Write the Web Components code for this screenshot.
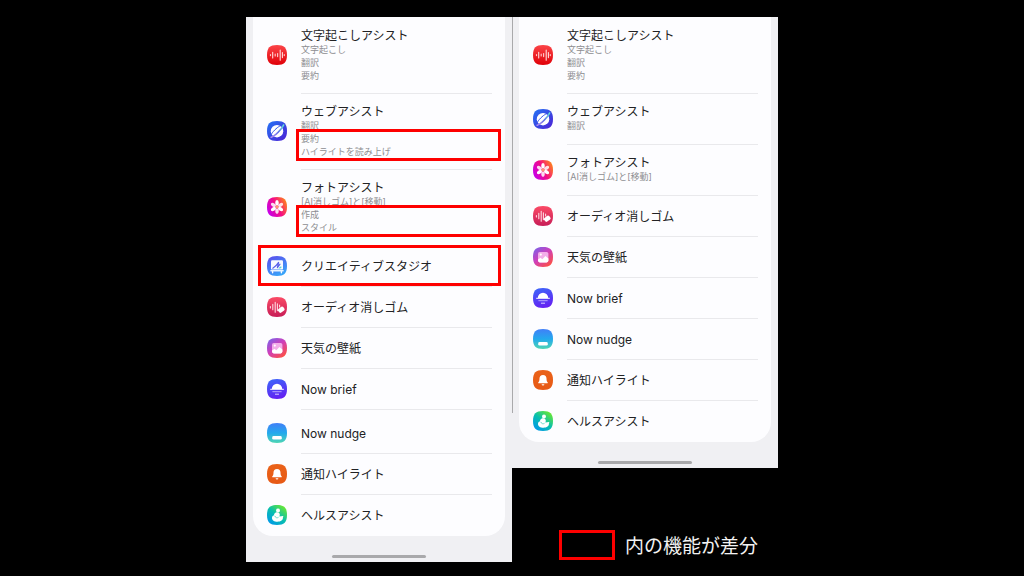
<!DOCTYPE html>
<html lang="ja">
<head>
<meta charset="utf-8">
<meta name="viewport" content="width=device-width, initial-scale=1">
<title>AIアシスト機能</title>
<style>
  body {
    margin: 0;
    background: #000;
    font-family: Inter, "Noto Sans CJK JP", sans-serif;
  }
</style>
</head>
<body>
<compare-board>
  <phone-screen slot="before">
    <feature-card seam>
      <feature-row icon="transcript" label="文字起こしアシスト">
        <feature-note>文字起こし</feature-note>
        <feature-note>翻訳</feature-note>
        <feature-note>要約</feature-note>
      </feature-row>
      <feature-row icon="web" label="ウェブアシスト">
        <feature-note>翻訳</feature-note>
        <diff-mark>
          <feature-note>要約</feature-note>
          <feature-note>ハイライトを読み上げ</feature-note>
        </diff-mark>
      </feature-row>
      <feature-row icon="photo" label="フォトアシスト">
        <feature-note>[AI消しゴム]と[移動]</feature-note>
        <diff-mark>
          <feature-note>作成</feature-note>
          <feature-note>スタイル</feature-note>
        </diff-mark>
      </feature-row>
      <feature-row icon="studio" label="クリエイティブスタジオ" single marked></feature-row>
      <feature-row icon="audio" label="オーディオ消しゴム" single></feature-row>
      <feature-row icon="weather" label="天気の壁紙" single></feature-row>
      <feature-row icon="brief" label="Now brief" single></feature-row>
    </feature-card>
    <feature-card end>
      <feature-row icon="nudge" label="Now nudge" single></feature-row>
      <feature-row icon="bell" label="通知ハイライト" single></feature-row>
      <feature-row icon="health" label="ヘルスアシスト" single last></feature-row>
    </feature-card>
  </phone-screen>

  <phone-screen slot="after">
    <feature-card top end>
      <feature-row icon="transcript" label="文字起こしアシスト">
        <feature-note>文字起こし</feature-note>
        <feature-note>翻訳</feature-note>
        <feature-note>要約</feature-note>
      </feature-row>
      <feature-row icon="web" label="ウェブアシスト">
        <feature-note>翻訳</feature-note>
      </feature-row>
      <feature-row icon="photo" label="フォトアシスト">
        <feature-note>[AI消しゴム]と[移動]</feature-note>
      </feature-row>
      <feature-row icon="audio" label="オーディオ消しゴム" single></feature-row>
      <feature-row icon="weather" label="天気の壁紙" single></feature-row>
      <feature-row icon="brief" label="Now brief" single></feature-row>
      <feature-row icon="nudge" label="Now nudge" single></feature-row>
      <feature-row icon="bell" label="通知ハイライト" single></feature-row>
      <feature-row icon="health" label="ヘルスアシスト" single last></feature-row>
    </feature-card>
  </phone-screen>

  <diff-legend slot="legend">内の機能が差分</diff-legend>
</compare-board>

<script>
  // Each icon: gradient stops and direction for the tile, then the glyph on it.
  const ICONS = {
    transcript: {
      from: "#fb4548", to: "#e00008", dir: [0, 0, 0, 1],
      glyph: `
        <path d="M3.500 9.600v1M8.200 9.200v1.800M10.600 8.600v3M17.300 9.600v1" stroke="#ffc4c4" stroke-width="1.200" stroke-linecap="round"/>
        <path d="M5.700 7.200v5.800M13.200 5v10.200M15.400 7.600v5" stroke="#ffdcdc" stroke-width="1.100" stroke-linecap="round"/>`,
    },
    web: {
      from: "#2374f5", to: "#4d20d4", dir: [0, 0, 1, 1],
      glyph: `
        <linearGradient id="ring" x1="0" y1="1" x2="1" y2="0">
          <stop offset="0" stop-color="#b78df0"/><stop offset=".5" stop-color="#5a6ce8"/><stop offset="1" stop-color="#63e8d4"/>
        </linearGradient>
        <circle cx="10" cy="10.2" r="6.200" fill="#fff"/>
        <path d="M4.200 16.200C2.600 15.200 5.200 11.200 9 7.800S16.800 3 16.600 4.400" fill="none" stroke="url(#tile)" stroke-width="1"/>
        <path d="M4.200 16.200C7.500 15.400 14.600 8.600 16.600 4" fill="none" stroke="url(#ring)" stroke-width="1.600" stroke-linecap="round"/>`,
    },
    photo: {
      from: "#c500ed", mid: "#f40d83", to: "#ff8a16", dir: [0, .7, 1, .2],
      glyph: `
        <g fill="#fff">
          <ellipse cx="10" cy="5.9" rx="1.8" ry="2.8"/>
          <ellipse cx="10" cy="5.9" rx="1.8" ry="2.8" transform="rotate(60 10 10)" opacity=".85"/>
          <ellipse cx="10" cy="5.9" rx="1.8" ry="2.8" transform="rotate(120 10 10)"/>
          <ellipse cx="10" cy="5.9" rx="1.8" ry="2.8" transform="rotate(180 10 10)" opacity=".85"/>
          <ellipse cx="10" cy="5.9" rx="1.8" ry="2.8" transform="rotate(240 10 10)"/>
          <ellipse cx="10" cy="5.9" rx="1.8" ry="2.8" transform="rotate(300 10 10)" opacity=".85"/>
        </g>
        <circle cx="10" cy="10" r="1.4" fill="#ff9a6c"/>`,
    },
    studio: {
      from: "#5a50ed", to: "#36a8fa", dir: [.2, 0, .7, 1],
      glyph: `
        <path d="M5.600 15.200v1.600M14.400 15.200v1.600" stroke="#fff" stroke-width="1.4" stroke-linecap="round"/>
        <rect x="4" y="4.200" width="12" height="9.400" rx="1.2" fill="#f7faff"/>
        <rect x="3.200" y="14" width="13.600" height="1.500" rx=".7" fill="#eaf4ff"/>
        <path d="M5.800 12.200Q9.400 10 11.600 6.400L10.400 11.600l2.600-3.400" fill="none" stroke="#5a62ea" stroke-width="1.2" stroke-linecap="round" stroke-linejoin="round"/>
        <path d="M11.400 12.400c1-1 1.8-2.4 2.8-1.8s0 1.6-1 1.9z" fill="#55d3ce"/>`,
    },
    audio: {
      from: "#fb4b66", to: "#c71d57", dir: [0, 0, 0, 1],
      glyph: `
        <path d="M3.4 9.5v1.4M5.8 7.4v5.4M8.2 5.200v10M10.400 6.800v6.800M12.600 8v2" stroke="#ffd9e1" stroke-width="1.1" stroke-linecap="round"/>
        <rect x="11" y="10.4" width="6.4" height="4.6" rx="1.4" transform="rotate(-38 14.2 12.6)" fill="#fff"/>`,
    },
    weather: {
      from: "#7067ee", mid: "#ce3fbc", to: "#ff5140", dir: [0, 0, .8, 1],
      glyph: `
        <rect x="5" y="5" width="10.4" height="10.4" rx="1.8" fill="#f3aee9"/>
        <circle cx="7.8" cy="7.6" r="1.1" fill="#fff"/>
        <path d="M5 12.4 7.500 10.800 9.300 12.200 12.400 8.900 15.400 11.400V13.6Q15.4 15.4 13.6 15.4H6.8Q5 15.4 5 13.6Z" fill="#fff"/>`,
    },
    brief: {
      from: "#3d65fa", to: "#6420f2", dir: [.2, 0, .5, 1],
      glyph: `
        <path d="M4.8 10a5.2 5.2 0 0 1 10.4 0z" fill="#fff"/>
        <path d="M3.6 10.3h12.8" stroke="#fff" stroke-width="1" stroke-linecap="round"/>
        <path d="M5.8 12.7h8.4" stroke="#c3b3ff" stroke-width=".9" stroke-linecap="round"/>
        <path d="M8.4 15.2h3.2" stroke="#d9ceff" stroke-width="1" stroke-linecap="round"/>`,
    },
    nudge: {
      from: "#417ff8", mid: "#23a9ed", to: "#4fd6b4", dir: [.4, 0, .4, 1],
      glyph: `<rect x="5.2" y="13" width="9.6" height="3.6" rx="1.4" fill="#fff"/>`,
    },
    bell: {
      from: "#ea6219", to: "#e75915", dir: [0, 0, 0, 1],
      glyph: `
        <path d="M10 4.9c2.3 0 3.5 1.6 3.5 3.7 0 2.2.5 3 1.1 3.7.4.5.2 1-.4 1H5.8c-.6 0-.8-.5-.4-1 .6-.7 1.1-1.5 1.1-3.7 0-2.1 1.2-3.7 3.5-3.7z" fill="#fff"/>
        <path d="M8.6 14.2h2.8a1.4 1.2 0 0 1-2.8 0z" fill="#fff"/>`,
    },
    health: {
      from: "#0094f0", mid: "#08bfae", to: "#78ee1f", dir: [.1, 1, .9, 0],
      glyph: `
        <circle cx="11" cy="5.6" r="2" fill="#fff"/>
        <path d="M8.4 7.800c1.800-1 4.200-.2 4.400 1.600.1 1-.5 1.500-.3 2l3.200-.4c.9 0 .8 1 .2 1.500.3 2.500-2.200 4.200-5.400 4.200s-5.500-1.600-5.500-3.800c0-1.600 1-2.600 2.400-2.600-1-.7.2-2 1-2.500z" fill="#fff"/>
        <path d="M8 11.400c.4 1.300 1.900 1.900 3.200 1.100" fill="none" stroke="#4fd3c0" stroke-width=".8" stroke-linecap="round"/>`,
    },
  };

  /** Squircle app icon. The "name" attribute picks the entry from ICONS. */
  class AppIcon extends HTMLElement {
    constructor() {
      super();
      this.attachShadow({ mode: "open" });
    }

    connectedCallback() {
      const { from, mid, to, dir, glyph } = ICONS[this.getAttribute("name")];
      const [x1, y1, x2, y2] = dir;
      this.shadowRoot.innerHTML = `
        <style>
          :host { display: block; width: 20px; height: 20px; }
          svg { display: block; width: 100%; height: 100%; }
        </style>
        <svg viewBox="0 0 20 20" aria-hidden="true">
          <linearGradient id="tile" x1="${x1}" y1="${y1}" x2="${x2}" y2="${y2}">
            <stop offset="0" stop-color="${from}"/>
            ${mid ? `<stop offset=".5" stop-color="${mid}"/>` : ""}
            <stop offset="1" stop-color="${to}"/>
          </linearGradient>
          <path d="M10 0C17.2 0 20 2.8 20 10S17.2 20 10 20 0 17.2 0 10 2.8 0 10 0Z" fill="url(#tile)"/>
          ${glyph}
        </svg>
      `;
    }
  }

  /** Small grey line under a feature title. */
  class FeatureNote extends HTMLElement {
    constructor() {
      super();
      this.attachShadow({ mode: "open" }).innerHTML = `
        <style>
          :host { display: block; font-size: 9px; line-height: 13px; color: #8d8d91; }
        </style>
        <slot></slot>
      `;
    }
  }

  /** Red frame drawn around the notes it wraps. */
  class DiffMark extends HTMLElement {
    constructor() {
      super();
      this.attachShadow({ mode: "open" }).innerHTML = `
        <style>
          :host { display: block; position: relative; }
          .frame { position: absolute; inset: -3px -9px -3px -5px; border: 3px solid #fe0000; }
        </style>
        <slot></slot>
        <div class="frame"></div>
      `;
    }
  }

  /** One feature: icon, title and optional notes in the default slot. */
  class FeatureRow extends HTMLElement {
    constructor() {
      super();
      this.attachShadow({ mode: "open" });
    }

    connectedCallback() {
      this.setAttribute("role", "listitem");
      this.shadowRoot.innerHTML = `
        <style>
          :host {
            display: grid;
            grid-template-columns: 20px 1fr;
            column-gap: 14px;
            align-items: center;
            position: relative;
            padding: 0 13px 0 14px;
          }
          app-icon { margin-bottom: 2px; }
          .body {
            box-sizing: border-box;
            min-height: 51px;
            padding: 11px 0;
            border-bottom: 1px solid #e9e9ec;
          }
          .title { font-size: 12px; line-height: 14px; color: #222224; white-space: nowrap; }
          :host([single]) .body { min-height: 41px; padding: 14px 0 12px; }
          :host([last]) .body { border-bottom-color: transparent; }
          .frame { position: absolute; inset: -1px 4px 1px 5px; border: 3px solid #fe0000; }
        </style>
        <app-icon name="${this.getAttribute("icon")}"></app-icon>
        <div class="body">
          <div class="title">${this.getAttribute("label")}</div>
          <slot></slot>
        </div>
        ${this.hasAttribute("marked") ? `<div class="frame"></div>` : ""}
      `;
    }
  }

  /** White list card. "end" rounds the bottom, "seam" draws the edge line. */
  class FeatureCard extends HTMLElement {
    constructor() {
      super();
      this.attachShadow({ mode: "open" }).innerHTML = `
        <style>
          :host { display: block; padding: 0 7px; }
          .card { background: #fdfdff; }
          :host([seam]) { position: relative; z-index: 1; box-shadow: 1px 0 0 #a9a9ab; }
          :host([seam]) .card { padding: 1px 0 3px; }
          :host([top]) .card { padding-top: 1px; }
          :host([end]) .card { border-radius: 0 0 20px 20px; }
        </style>
        <div class="card" role="list"><slot></slot></div>
      `;
    }
  }

  /** Phone screen area with the home handle at the bottom. */
  class PhoneScreen extends HTMLElement {
    constructor() {
      super();
      this.attachShadow({ mode: "open" }).innerHTML = `
        <style>
          :host { display: block; background: #f0f0f3; }
          .handle { padding: 19px 0 4px; }
          .handle::before {
            content: "";
            display: block;
            width: 35%;
            height: 3px;
            margin: 0 auto;
            border-radius: 2px;
            background: #a9a9ab;
          }
        </style>
        <slot></slot>
        <div class="handle"></div>
      `;
    }
  }

  /** Legend: an empty red frame followed by its meaning. */
  class DiffLegend extends HTMLElement {
    constructor() {
      super();
      this.attachShadow({ mode: "open" }).innerHTML = `
        <style>
          :host {
            display: flex;
            align-items: center;
            gap: 10px;
            font-size: 19px;
            line-height: 28px;
            color: #f2f2f2;
            white-space: nowrap;
          }
          .swatch { box-sizing: border-box; width: 56px; height: 30px; border: 3px solid #fe0000; }
          .text { padding-top: 4px; }
        </style>
        <div class="swatch"></div>
        <span class="text"><slot></slot></span>
      `;
    }
  }

  /** Two screens side by side with the legend under the second. */
  class CompareBoard extends HTMLElement {
    constructor() {
      super();
      this.attachShadow({ mode: "open" }).innerHTML = `
        <style>
          :host {
            display: grid;
            grid-template-columns: 1fr 1fr;
            align-items: start;
            width: calc(50% + 20px);
            min-width: 480px;
            margin: 0 auto;
            padding: 17px 0 14px;
          }
          .legend { padding: 61px 0 0 47px; }
        </style>
        <slot name="before"></slot>
        <div>
          <slot name="after"></slot>
          <div class="legend"><slot name="legend"></slot></div>
        </div>
      `;
    }
  }

  customElements.define("app-icon", AppIcon);
  customElements.define("feature-note", FeatureNote);
  customElements.define("diff-mark", DiffMark);
  customElements.define("feature-row", FeatureRow);
  customElements.define("feature-card", FeatureCard);
  customElements.define("phone-screen", PhoneScreen);
  customElements.define("diff-legend", DiffLegend);
  customElements.define("compare-board", CompareBoard);
</script>
</body>
</html>
